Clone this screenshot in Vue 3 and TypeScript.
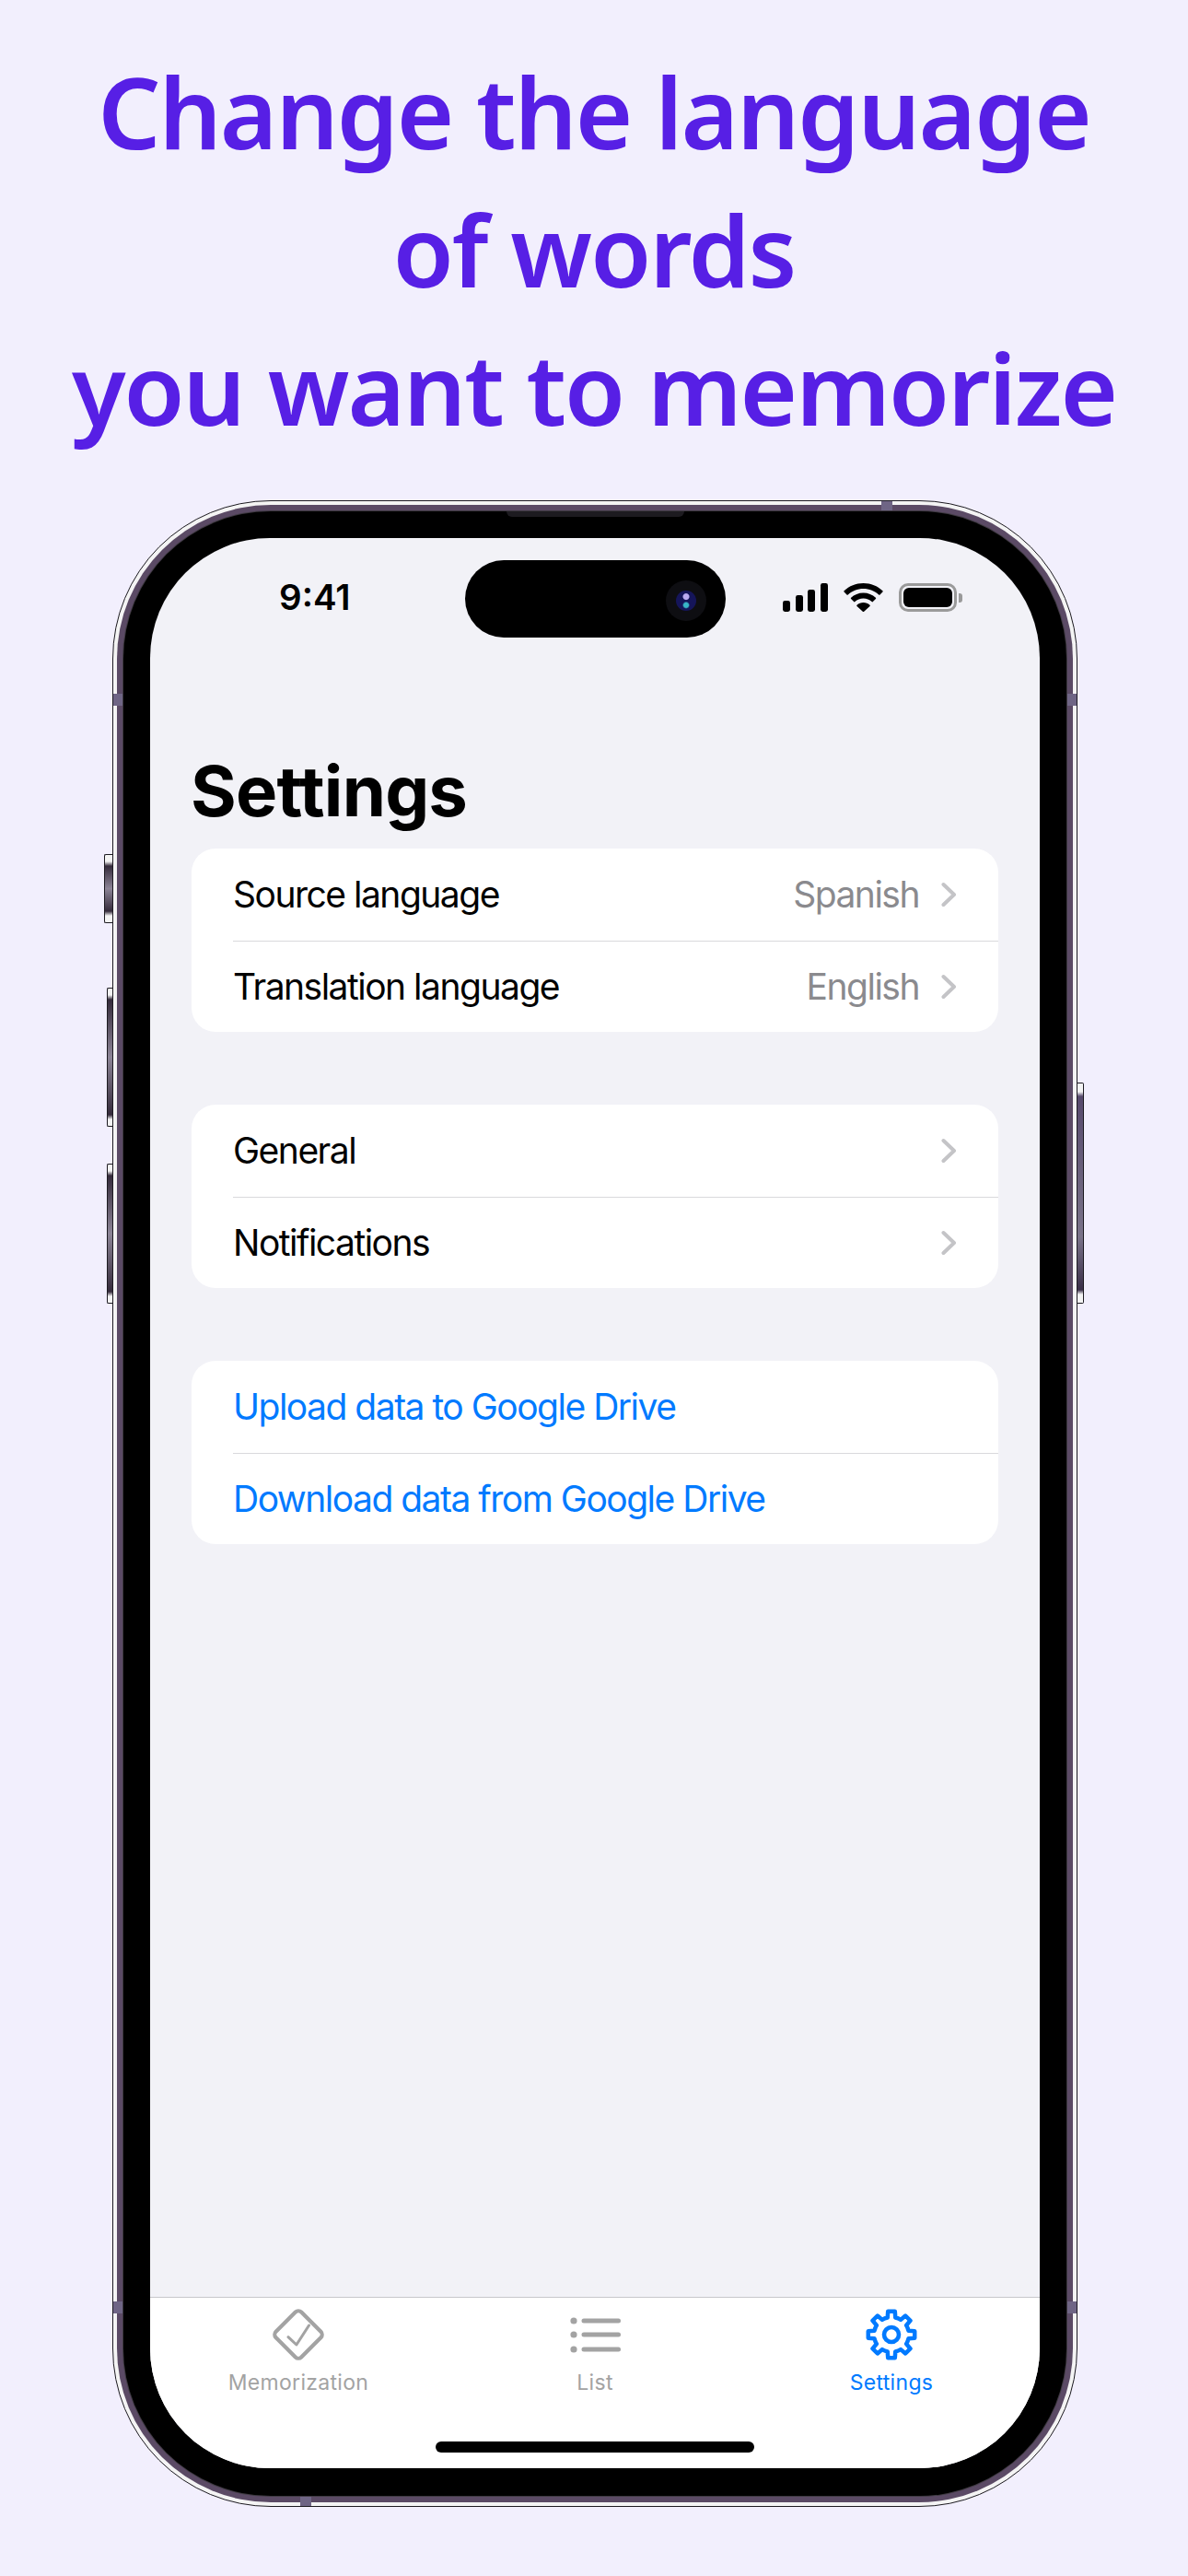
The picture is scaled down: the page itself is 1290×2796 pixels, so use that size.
<script setup lang="ts">
interface Row { label: string; value?: string; chevron?: boolean; link?: boolean }
const groups: Row[][] = [
  [
    { label: 'Source language', value: 'Spanish', chevron: true },
    { label: 'Translation language', value: 'English', chevron: true },
  ],
  [
    { label: 'General', chevron: true },
    { label: 'Notifications', chevron: true },
  ],
  [
    { label: 'Upload data to Google Drive', link: true },
    { label: 'Download data from Google Drive', link: true },
  ],
]

const polar = (r: number, deg: number): string => {
  const a = ((deg - 90) * Math.PI) / 180
  return `${(30 + r * Math.cos(a)).toFixed(2)} ${(30 + r * Math.sin(a)).toFixed(2)}`
}
const rootR = 19
const tipR = 25.5
const gearPath = Array.from({ length: 8 }, (_, k) => {
  const t = k * 45
  const start = k === 0 ? 'M' : `A${rootR} ${rootR} 0 0 1`
  return `${start} ${polar(rootR, t - 13)} L${polar(tipR, t - 8.5)} L${polar(tipR, t + 8.5)} L${polar(rootR, t + 13)}`
}).join(' ') + ` A${rootR} ${rootR} 0 0 1 ${polar(rootR, -13)} Z`
</script>

<template>
  <main class="page">
    <h1 class="headline">
      <span>Change the language</span>
      <span>of words</span>
      <span>you want to memorize</span>
    </h1>

    <div class="device">
      <i class="btn btn-silent"></i>
      <i class="btn btn-up"></i>
      <i class="btn btn-down"></i>
      <i class="btn btn-power"></i>
      <i class="tick tick-tl"></i>
      <i class="tick tick-tr"></i>
      <i class="tick tick-bl"></i>
      <i class="tick tick-br"></i>
      <i class="tick-h tick-top"></i>
      <i class="tick-h tick-bottom"></i>
      <div class="band">
        <div class="bezel">
          <i class="speaker"></i>
          <div class="screen">
            <div class="island">
              <span class="lens"><span class="lens-in"></span></span>
            </div>
            <header class="status">
              <span class="time">9:41</span>
              <div class="status-icons">
                <svg class="signal" width="49" height="31" viewBox="0 0 49 31">
                  <rect x="0" y="19" width="8" height="12" rx="2.4" />
                  <rect x="14" y="13" width="8" height="18" rx="2.4" />
                  <rect x="27" y="7" width="8" height="24" rx="2.4" />
                  <rect x="41" y="0" width="8" height="31" rx="2.4" />
                </svg>
                <svg class="wifi" width="43" height="31" viewBox="0 0 43 31">
                  <path d="M21.5 0C13.4 0 6.1 3.1.6 8.2a.9.9 0 0 0 0 1.3l2.9 3a.9.9 0 0 0 1.3 0C9.2 8.400 15 6 21.500 6s12.300 2.400 16.700 6.500a.9.900 0 0 0 1.300 0l2.900-3a.9.900 0 0 0 0-1.300C36.900 3.100 29.600 0 21.500 0Z" />
                  <path d="M21.500 10.500c-5.200 0-9.900 2-13.400 5.200a.9.900 0 0 0 0 1.300l3 3a.9.900 0 0 0 1.300.1c2.400-2.200 5.600-3.500 9.100-3.500s6.700 1.300 9.100 3.500a.9.900 0 0 0 1.300-.1l3-3a.9.900 0 0 0 0-1.300c-3.500-3.200-8.200-5.200-13.400-5.200Z" />
                  <path d="M21.500 21c-2.700 0-5.200 1-7 2.700a.9.900 0 0 0 0 1.300l6.300 5.700a1 1 0 0 0 1.400 0l6.300-5.700a.9.900 0 0 0 0-1.300c-1.800-1.700-4.300-2.700-7-2.700Z" />
                </svg>
                <div class="battery">
                  <div class="battery-body"><div class="battery-fill"></div></div>
                  <div class="battery-cap"></div>
                </div>
              </div>
            </header>

            <section class="content">
              <h2 class="title">Settings</h2>
              <div class="groups">
                <div v-for="(group, g) in groups" :key="g" class="card">
                  <div v-for="row in group" :key="row.label" class="row">
                    <span class="label" :class="{ link: row.link }">{{ row.label }}</span>
                    <span v-if="row.value" class="value">{{ row.value }}</span>
                    <svg v-if="row.chevron" class="chevron" width="17" height="28" viewBox="0 0 17 28" fill="none">
                      <path d="M2.500 3 14 14 2.500 25" stroke="#c4c4c7" stroke-width="4" stroke-linecap="round" stroke-linejoin="round" />
                    </svg>
                  </div>
                </div>
              </div>
            </section>

            <nav class="tabbar">
              <div class="tabs">
                <div class="tab">
                  <svg width="60" height="60" viewBox="0 0 60 60" fill="none">
                    <rect x="10.500" y="10.500" width="39" height="39" rx="4.500" transform="rotate(45 30 30)" stroke="#a3a3a3" stroke-width="4.200" />
                    <path d="M19 32.700 27.900 41 41.500 20" stroke="#a3a3a3" stroke-width="3" stroke-linecap="round" stroke-linejoin="round" />
                  </svg>
                  <span class="tab-label">Memorization</span>
                </div>
                <div class="tab">
                  <svg width="60" height="60" viewBox="0 0 60 60" fill="none">
                    <g fill="#a3a3a3">
                      <circle cx="7" cy="15" r="3.600" />
                      <circle cx="7" cy="30" r="3.600" />
                      <circle cx="7" cy="46" r="3.600" />
                    </g>
                    <g stroke="#a3a3a3" stroke-width="5" stroke-linecap="round">
                      <path d="M18 15h37.500M18 30h37.500M18 46h37.500" />
                    </g>
                  </svg>
                  <span class="tab-label">List</span>
                </div>
                <div class="tab active">
                  <svg width="60" height="60" viewBox="0 0 60 60" fill="none">
                    <path :d="gearPath" stroke="#007aff" stroke-width="4.500" stroke-linejoin="round" />
                    <circle cx="30" cy="30" r="8" stroke="#007aff" stroke-width="4.600" />
                  </svg>
                  <span class="tab-label">Settings</span>
                </div>
              </div>
              <div class="home"></div>
            </nav>
          </div>
        </div>
      </div>
    </div>
  </main>
</template>

<style>
html, body { margin: 0; background: #f2effd; }
</style>

<style scoped>
.page {
  width: 1290px;
  height: 2796px;
  background: #f2effd;
  overflow: hidden;
  display: flex;
  flex-direction: column;
  align-items: center;
  padding-top: 46px;
  box-sizing: border-box;
  font-family: Inter, "Liberation Sans", sans-serif;
}
.headline {
  margin: 0;
  height: 497px;
  display: flex;
  flex-direction: column;
  align-items: center;
  font-family: "Noto Sans", "Liberation Sans", sans-serif;
  font-size: 107px;
  font-weight: 600;
  line-height: 150px;
  letter-spacing: -2px;
  color: #571fe5;
  white-space: nowrap;
}
.device {
  position: relative;
  flex: none;
  width: 1048px;
  height: 2178px;
  margin-left: 2px;
  box-sizing: border-box;
  border: 1px solid #1c1a20;
  border-radius: 172px;
  background: #f4f4f4;
  padding: 4px;
}
.band {
  height: 100%;
  box-sizing: border-box;
  border-radius: 167px;
  background: #5b4a65;
  padding: 7px;
}
.bezel {
  position: relative;
  height: 100%;
  box-sizing: border-box;
  border-radius: 160px;
  background: #000;
  box-shadow: 0 0 0 1px #3f3a42;
  padding: 29px 29px 30px;
}
.speaker {
  position: absolute;
  top: 0;
  left: 50%;
  width: 193px;
  height: 6px;
  margin-left: -96.500px;
  background: #1d1b20;
  border-radius: 0 0 6px 6px;
}
.screen {
  position: relative;
  height: 100%;
  border-radius: 130px;
  background: #f2f2f7;
  overflow: hidden;
  display: flex;
  flex-direction: column;
}
.island {
  position: absolute;
  top: 24px;
  left: 342px;
  width: 283px;
  height: 84px;
  border-radius: 42px;
  background: #000;
}
.lens {
  position: absolute;
  left: 218px;
  top: 22px;
  width: 44px;
  height: 44px;
  border-radius: 50%;
  background: #0e0e12;
  display: flex;
  align-items: center;
  justify-content: center;
}
.lens-in {
  width: 22px;
  height: 22px;
  border-radius: 50%;
  background: radial-gradient(circle at 50% 30%, #b9a9f0 0 3px, transparent 4px), radial-gradient(circle at 50% 72%, #38b5c8 0 2.500px, transparent 4px), #15155a;
}
.status {
  flex: none;
  height: 80px;
  margin-top: 49px;
  display: flex;
  align-items: flex-start;
  justify-content: space-between;
  padding: 0 84px 0 140px;
}
.time {
  font-size: 38.500px;
  font-weight: 600;
  line-height: 31px;
  color: #000;
}
.status-icons {
  display: flex;
  gap: 17px;
}
.signal, .wifi { fill: #000; display: block; }
.battery {
  display: flex;
  align-items: center;
  gap: 2px;
}
.battery-body {
  width: 63px;
  height: 31px;
  box-sizing: border-box;
  border: 3px solid #9a9a9a;
  border-radius: 10px;
  padding: 2px;
}
.battery-fill {
  height: 100%;
  background: #000;
  border-radius: 6px;
}
.battery-cap {
  width: 4px;
  height: 10px;
  background: #9a9a9a;
  border-radius: 0 3px 3px 0;
}
.content {
  flex: 1;
  padding: 0 45px;
}
.title {
  margin: 0 0 0 -1px;
  height: 108px;
  padding-top: 100px;
  box-sizing: content-box;
  font-size: 76px;
  font-weight: 700;
  line-height: 90px;
  letter-spacing: -0.800px;
  color: #000;
}
.groups {
  display: flex;
  flex-direction: column;
  gap: 79px;
}
.card {
  background: #fff;
  border-radius: 26px;
  overflow: hidden;
}
.row {
  height: 99.500px;
  box-sizing: border-box;
  margin-left: 45px;
  padding-right: 45px;
  display: flex;
  align-items: center;
  font-size: 39px;
  line-height: 50px;
  letter-spacing: -1.500px;
  color: #000;
}
.row + .row { border-top: 1.500px solid #d9d9dc; }
.label { flex: 1; white-space: nowrap; }
.label.link { color: #007aff; }
.value {
  color: #8a8a8e;
  margin-right: 24px;
}
.chevron { flex: none; }
.tabbar {
  flex: none;
  height: 186px;
  box-sizing: border-box;
  border-top: 1.500px solid #c8c8cc;
  background: #fff;
  display: flex;
  flex-direction: column;
}
.tabs {
  display: flex;
  padding-top: 10px;
  height: 156px;
  box-sizing: border-box;
}
.tab {
  flex: 1;
  display: flex;
  flex-direction: column;
  align-items: center;
  color: #a3a3a3;
}
.tab.active { color: #007aff; }
.tab-label {
  margin-top: 7px;
  font-size: 23px;
  line-height: 30px;
  font-weight: 400;
  letter-spacing: 0.300px;
}
.home {
  align-self: center;
  width: 346px;
  height: 12px;
  border-radius: 6px;
  background: #000;
}
.btn {
  position: absolute;
  background: linear-gradient(#f4f4f4 0 7px, #352b3b 12px, #8c8496 50%, #352b3b calc(100% - 12px), #f4f4f4 calc(100% - 7px));
  border: 1px solid #1c1a20;
  box-sizing: border-box;
}
.btn-silent { left: -10px; top: 383px; width: 9px; height: 75px; border-right: none; border-radius: 2px 0 0 2px; }
.btn-up { left: -7px; top: 528px; width: 6px; height: 151px; border-right: none; border-radius: 2px 0 0 2px; }
.btn-down { left: -7px; top: 719px; width: 6px; height: 152px; border-right: none; border-radius: 2px 0 0 2px; }
.btn-power { right: -8px; top: 631px; width: 7px; height: 240px; border-left: none; border-radius: 0 2px 2px 0; background: linear-gradient(#f4f4f4 0 9px, #574a6d 14px, #7a7389 70%, #3a2f48 calc(100% - 14px), #f4f4f4 calc(100% - 9px)); }
.tick, .tick-h { position: absolute; background: #6f6585; }
.tick { width: 12px; height: 13px; }
.tick-tl { left: 0; top: 209px; }
.tick-tr { right: 0; top: 209px; }
.tick-bl { left: 0; top: 1954px; }
.tick-br { right: 0; top: 1954px; }
.tick-h { width: 12px; height: 11px; }
.tick-top { left: 834px; top: 0; }
.tick-bottom { left: 203px; bottom: 0; }
</style>
